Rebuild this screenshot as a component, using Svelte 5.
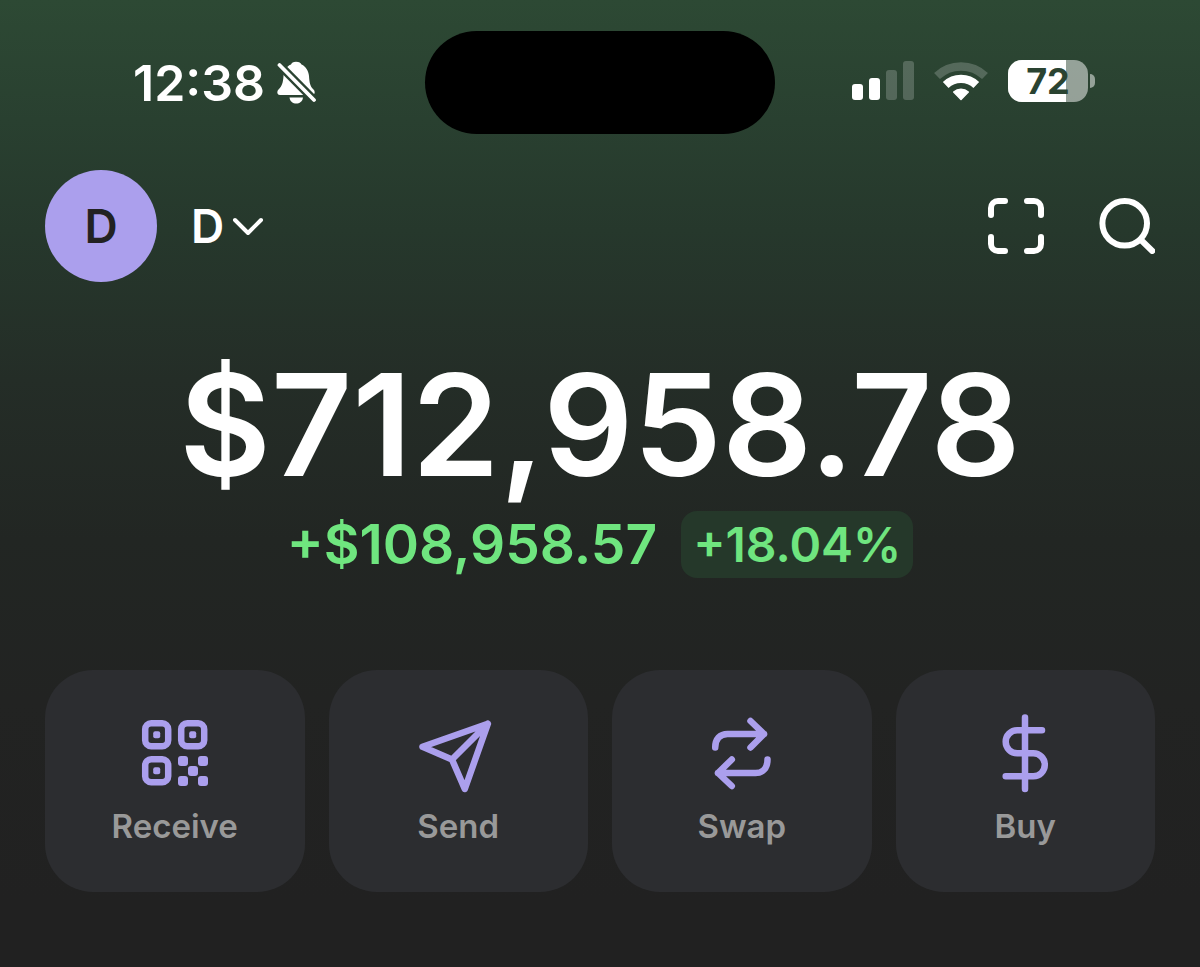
<script>
    const account = "D";
    const balance = "$712,958.78";
    const change = { amount: "+$108,958.57", percent: "+18.04%" };
    const battery = 72;

    const bars = [
        { height: 16, on: true },
        { height: 22, on: true },
        { height: 30, on: false },
        { height: 39, on: false }
    ];

    const actions = [
        { id: "receive", label: "Receive" },
        { id: "send", label: "Send" },
        { id: "swap", label: "Swap" },
        { id: "buy", label: "Buy" }
    ];
</script>

<div class="screen">
    <div class="status-bar">
        <div class="status-left">
            <span class="time">12:38</span>
            <svg class="bell" viewBox="0 0 40 44" aria-hidden="true">
                <mask id="bell-cut">
                    <rect width="40" height="44" fill="#fff" />
                    <path d="M-1.500 0 L41 43" stroke="#000" stroke-width="8.400" />
                </mask>
                <g fill="#fff" mask="url(#bell-cut)">
                    <path d="M19 .7C16.200 .7 14.500 2 14 3.500C9 5.500 7 10 6.500 15C6 22 5 25 1.500 28.500C-.5 30.500 0 34 3 34H35C38 34 38.500 30.500 36.500 28.500C33 25 32.500 22 32 15C31.500 10 29 5.500 24.500 3.500C24 2 22 .7 19 .7Z" />
                    <path d="M12.500 36.500H26C25.500 40.500 22.500 42.500 19.200 42.500S13 40.500 12.500 36.500Z" />
                </g>
                <path d="M2.500 4 L37 39" stroke="#fff" stroke-width="3.800" stroke-linecap="round" />
            </svg>
        </div>

        <div class="island"></div>

        <div class="status-right">
            <div class="signal">
                {#each bars as bar}
                    <i class="bar" class:on={bar.on} style="height:{bar.height}px"></i>
                {/each}
            </div>
            <svg class="wifi" viewBox="0 0 54 40" fill="none" stroke="#fff" aria-hidden="true">
                <path d="M3 17A34.800 34.800 0 0 1 51 17" transform="translate(0 -2)" stroke-width="8.500" opacity=".2" />
                <path d="M11.700 24A22.300 22.300 0 0 1 42.300 24" stroke-width="8.300" />
                <path d="M27 38.500L19.700 31A11 11 0 0 1 34.300 31Z" fill="#fff" stroke-width="1.500" stroke-linejoin="round" />
            </svg>
            <div class="battery">
                <div class="battery-body">
                    <i class="battery-fill" style="width:{battery}%"></i>
                    <span class="battery-text">{battery}</span>
                </div>
                <i class="battery-tip"></i>
            </div>
        </div>
    </div>

    <header class="header">
        <button class="avatar" aria-label="Profile">{account}</button>
        <button class="account">
            {account}
            <svg class="chevron" viewBox="0 0 32 20" aria-hidden="true">
                <path d="M3 4L16 17L29 4" />
            </svg>
        </button>
        <div class="tools">
            <button class="tool" aria-label="Scan">
                <svg viewBox="0 0 56 56">
                    <path d="M3 17V10A7 7 0 0 1 10 3H17M39 3H46A7 7 0 0 1 53 10V17M53 39V46A7 7 0 0 1 46 53H39M17 53H10A7 7 0 0 1 3 46V39" />
                </svg>
            </button>
            <button class="tool" aria-label="Search">
                <svg viewBox="0 0 56 56">
                    <circle cx="25.700" cy="25.300" r="22.300" />
                    <path d="M41.500 41.500L53.300 53" />
                </svg>
            </button>
        </div>
    </header>

    <main>
        <h1 class="balance">{balance}</h1>
        <div class="change">
            <span class="amount">{change.amount}</span>
            <span class="percent">{change.percent}</span>
        </div>

        <div class="actions">
            {#each actions as action (action.id)}
                <button class="action">
                    <svg class="action-icon" viewBox="0 0 80 80" aria-hidden="true">
                        {#if action.id === "receive"}
                            {#each [[7, 7], [43, 7], [7, 43]] as [x, y]}
                                <rect x={x + 3.2} y={y + 3.2} width="23" height="23" rx="6" />
                                <rect class="solid" x={x + 11.2} y={y + 11.2} width="7" height="7" rx="2" />
                            {/each}
                            {#each [[43, 43], [63, 43], [53, 53], [43, 63], [63, 63]] as [x, y]}
                                <rect class="solid" {x} {y} width="10" height="10" rx="3" />
                            {/each}
                        {:else if action.id === "send"}
                            <path d="M69.800 10.800L4.500 33.800L34 46.500L46.800 76ZL34 46.500" />
                        {:else if action.id === "swap"}
                            <path d="M48.500 8L62 21L48.500 34.500M62 21H25.500C18 21 13.200 26 13.200 34.500" />
                            <path d="M29.800 46.500L16 60L29.800 73M16 60H53.500C61 60 65.500 55 65.500 46.500" />
                        {:else}
                            <path d="M40 4.500V76M57 17.300H32.200A11.500 11.500 0 0 0 32.200 40.300H48.300A11.500 11.500 0 0 1 48.300 63.300H20.700" />
                        {/if}
                    </svg>
                    <span class="action-label">{action.label}</span>
                </button>
            {/each}
        </div>
    </main>
</div>

<style>
:global(body){
    margin:0;
    background:#212121;
}

.screen{
    min-height:100vh;
    box-sizing:border-box;
    padding:31px 45px 75px;
    font-family:Inter, "Liberation Sans", sans-serif;
    font-weight:600;
    color:#fff;
    background:linear-gradient(#2d4934 0, #294030 120px, #26382c 230px, #242d27 380px, #222623 540px, #222322 700px, #212121 900px);
}

button{
    border:0;
    padding:0;
    background:none;
    color:inherit;
    font:inherit;
    cursor:pointer;
}

svg{
    display:block;
}

.status-bar{
    display:grid;
    grid-template-columns:1fr auto 1fr;
    align-items:center;
}

.status-left{
    display:flex;
    align-items:center;
    gap:12px;
    padding-left:88px;
}

.time{
    font-size:50px;
    line-height:60px;
}

.bell{
    width:40px;
    height:44px;
}

.island{
    width:350px;
    height:103px;
    border-radius:52px;
    background:#000;
}

.status-right{
    display:flex;
    justify-content:flex-end;
    align-items:center;
    gap:20px;
    padding:0 60px 4px 0;
}

.signal{
    display:flex;
    align-items:flex-end;
    gap:6px;
}

.bar{
    width:11px;
    border-radius:3px;
    background:rgba(255,255,255,.2);
}

.bar.on{ background:#fff; }

.wifi{
    width:54px;
    height:40px;
}

.battery{
    display:flex;
    align-items:center;
    gap:2px;
}

.battery-body{
    position:relative;
    width:80px;
    height:42px;
    border-radius:14px;
    overflow:hidden;
    background:rgba(255,255,255,.5);
}

.battery-fill{
    position:absolute;
    inset:0 auto 0 0;
    background:#fff;
}

.battery-text{
    position:relative;
    display:block;
    text-align:center;
    font-size:36px;
    line-height:42px;
    font-weight:700;
    color:#2a4331;
}

.battery-tip{
    width:5px;
    height:14px;
    border-radius:0 6px 6px 0;
    background:rgba(255,255,255,.5);
}

.header{
    display:flex;
    align-items:center;
    margin-top:36px;
}

.avatar{
    width:112px;
    height:112px;
    border-radius:50%;
    background:#ab9fed;
    color:#222;
    font-size:46px;
}

.account{
    display:flex;
    align-items:center;
    gap:8px;
    margin-left:34px;
    font-size:46px;
}

.chevron{
    width:32px;
    height:20px;
    fill:none;
    stroke:#fff;
    stroke-width:4;
    stroke-linecap:round;
    stroke-linejoin:round;
}

.tools{
    display:flex;
    gap:55px;
    margin-left:auto;
}

.tool svg{
    width:56px;
    height:56px;
    fill:none;
    stroke:#fff;
    stroke-width:6;
    stroke-linecap:round;
    stroke-linejoin:round;
}

.balance{
    margin:63px 0 6px;
    text-align:center;
    font-size:141px;
    line-height:160px;
    font-weight:600;
}

.change{
    display:flex;
    justify-content:center;
    align-items:center;
    gap:24px;
    color:#6fe57f;
}

.amount{
    font-size:55px;
    line-height:67px;
}

.percent{
    padding:0 12px;
    border-radius:16px;
    background:#25382a;
    font-size:48px;
    line-height:67px;
}

.actions{
    display:grid;
    grid-template-columns:repeat(4, 1fr);
    gap:24px;
    margin-top:92px;
}

.action{
    display:flex;
    flex-direction:column;
    align-items:center;
    gap:13px;
    padding:43px 12px 46px;
    border-radius:48px;
    background:#2c2d30;
}

.action-icon{
    width:80px;
    height:80px;
    fill:none;
    stroke:#ab9fed;
    stroke-width:6.5;
    stroke-linecap:round;
    stroke-linejoin:round;
}

.solid{
    fill:#ab9fed;
    stroke:none;
}

.action-label{
    font-size:33px;
    line-height:40px;
    color:#999;
}
</style>
